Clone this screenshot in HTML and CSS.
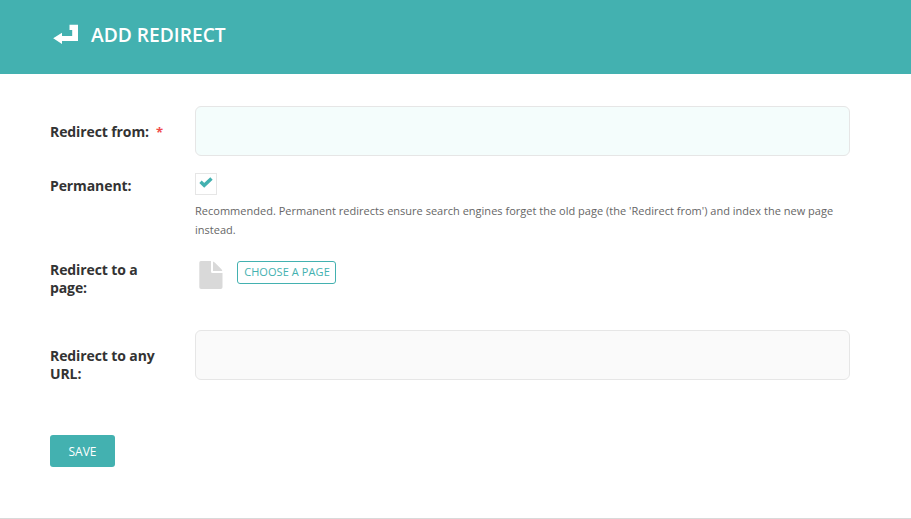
FILE: index.html
```
<!DOCTYPE html>
<html lang="en">
<head>
<meta charset="utf-8">
<title>Add redirect</title>
<link rel="stylesheet" href="styles.css">
</head>
<body>
<header class="header">
  <svg class="header-icon" width="26" height="21" viewBox="0 0 26 21"><path fill="#fff" d="M16.500 .7H25V17H9v3L.2 14.300 9 8.700V12h10.200V6h-2.700z"/></svg>
  <h1>ADD REDIRECT</h1>
</header>
<form class="form">
  <div class="row row-from">
    <label class="label">Redirect from:<span class="required">*</span></label>
    <div class="input input-focus"></div>
  </div>
  <div class="row row-permanent">
    <label class="label">Permanent:</label>
    <div class="field">
      <span class="check"><svg width="14" height="11" viewBox="0 0 14 11"><path fill="none" stroke="#43b1b0" stroke-width="3.400" d="M1.500 4.800 5.200 8.300 12.500 1.500"/></svg></span>
      <p class="help">Recommended. Permanent redirects ensure search engines forget the old page (the 'Redirect from') and index the new page instead.</p>
    </div>
  </div>
  <div class="row row-page">
    <label class="label">Redirect to a page:</label>
    <div class="chooser">
      <svg class="doc" width="24" height="28" viewBox="0 0 24 28"><path fill="#d9d9d9" d="M1.800 0H12v10.500q0 1.500 1.500 1.500H23.500v14.200q0 1.800-1.800 1.800H2.100Q.3 28 .3 26.200V1.800Q.3 0 1.800 0zM14 .5q1 .3 2 1.200l6 6q1 1 1.300 2.300H14z"/></svg>
      <button type="button" class="choose">CHOOSE A PAGE</button>
    </div>
  </div>
  <div class="row row-url">
    <label class="label">Redirect to any URL:</label>
    <div class="input"></div>
  </div>
  <button type="button" class="save">SAVE</button>
</form>
<footer class="footer"></footer>
</body>
</html>
```
FILE: styles.css
```
* { box-sizing: border-box; }
body { margin: 0; height: 519px; display: flex; flex-direction: column; background: #fff; color: #333; font-family: "Open Sans", sans-serif; overflow: hidden; }
.header { height: 74px; padding: 24px 0 0 53px; display: flex; align-items: flex-start; gap: 12px; background: #43b1b0; color: #fff; }
h1 { margin: -2px 0 0; font-size: 19.200px; line-height: 26px; font-weight: 600; }
.form { flex: 1; padding: 32px 61px 0 50px; }
.row { display: grid; grid-template-columns: 120px 655px; column-gap: 25px; align-items: start; }
.row-from { height: 67px; }
.row-permanent { height: 88px; }
.row-page { height: 69px; }
.row-url { height: 105px; }
.label { font-size: 14px; line-height: 18px; font-weight: 700; letter-spacing: -0.1px; }
.row-from .label, .row-url .label { padding-top: 17px; }
.row-permanent .label { padding-top: 4px; }
.required { margin-left: 7px; color: #f04b4b; font-size: 13px; font-weight: 700; }
.input { height: 50px; border: 1px solid #e6e6e6; border-radius: 6px; background: #fafafa; }
.input-focus { background: #f4fdfc; }
.check { display: flex; align-items: flex-start; justify-content: center; width: 22px; height: 22px; padding-top: 3px; border: 1px solid #e6e6e6; }
.help { margin: 6px 0 0; color: #666; font-size: 11px; line-height: 19px; letter-spacing: 0.013px; }
.chooser { display: flex; align-items: flex-start; padding-left: 4px; gap: 13px; }
.choose { width: 99px; height: 23px; margin-left: 1px; padding: 0 0 2px 1px; border: 1px solid #43b1b0; border-radius: 3px; background: #fff; color: #43b1b0; font: 11px "Open Sans", sans-serif; letter-spacing: 0.08px; }
.save { display: block; width: 65px; height: 32px; padding: 0; border: 0; border-radius: 3px; background: #43b1b0; color: #fff; font: 12px "Open Sans", sans-serif; }
.footer { height: 1px; background: #d9d9d9; }
```
